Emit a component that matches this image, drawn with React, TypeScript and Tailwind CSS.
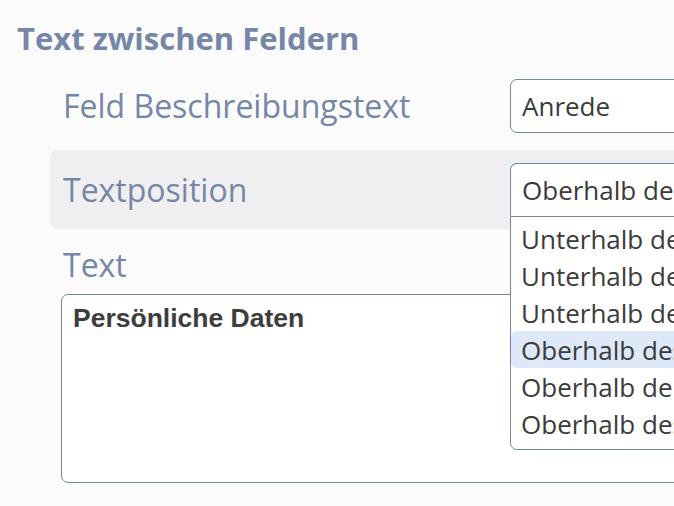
const options = [
  "Unterhalb des Feldes",
  "Unterhalb der Beschreibung",
  "Unterhalb des Eingabefeldes",
  "Oberhalb des Feldes",
  "Oberhalb der Beschreibung",
  "Oberhalb des Eingabefeldes",
];

export default function App() {
  const selected = 3;

  return (
    <div className="h-[506px] w-[674px] overflow-hidden bg-[#fbfbfc] font-['Open_Sans',sans-serif]">
      <h2 className="whitespace-nowrap pl-[17px] pt-[20px] text-[31px] font-bold leading-[36px] text-[#7686a7]">
        Text zwischen Feldern
      </h2>

      <div className="ml-[50px] mt-[23px] w-[760px]">
        {/* Beschreibungstext */}
        <div className="flex h-[54px] items-center px-[13px]">
          <label className="w-[447px] shrink-0 whitespace-nowrap text-[32px] leading-[42px] text-[#7686a7]">
            Feld Beschreibungstext
          </label>
          <div className="flex h-[54px] w-[300px] shrink-0 items-center rounded-[7px] border border-[#7384a6] bg-white px-[11px] text-[26px] text-[#3b3b3b]">
            Anrede
          </div>
        </div>

        {/* Textposition */}
        <div className="mt-[17px] flex h-[79px] items-center rounded-l-[8px] bg-[#efeff2] px-[13px]">
          <label className="w-[447px] shrink-0 whitespace-nowrap text-[32px] leading-[42px] text-[#7686a7]">
            Textposition
          </label>
          <div className="relative z-10 w-[300px] shrink-0">
            <div className="flex h-[53px] items-center whitespace-nowrap rounded-t-[7px] border border-b-0 border-[#7384a6] bg-white px-[11px] text-[26px] text-[#3b3b3b]">
              Oberhalb des Feldes
            </div>
            <ul className="absolute left-0 top-full w-full rounded-b-[7px] border border-[#7384a6] bg-white pb-[7px] pt-[3px] text-[26px] text-[#3b3b3b]">
              {options.map((o, i) => (
                <li
                  key={o}
                  className={`h-[37px] whitespace-nowrap px-[10px] pt-[1px] leading-[37px] ${
                    i === selected ? "rounded-l-[6px] bg-[#dde8f9]" : ""
                  }`}
                >
                  {o}
                </li>
              ))}
            </ul>
          </div>
        </div>

        {/* Text */}
        <div className="mt-[15px] px-[13px]">
          <label className="block text-[32px] leading-[42px] text-[#7686a7]">
            Text
          </label>
        </div>
        <div className="ml-[11px] mt-[8px] h-[189px] rounded-[7px] border border-[#7384a6] bg-white px-[11px] pt-[8px]">
          <p className="font-['Liberation_Sans',Arial,sans-serif] text-[26.5px] font-bold leading-[30px] text-[#3d3d3d]">
            Persönliche Daten
          </p>
        </div>
      </div>
    </div>
  );
}
